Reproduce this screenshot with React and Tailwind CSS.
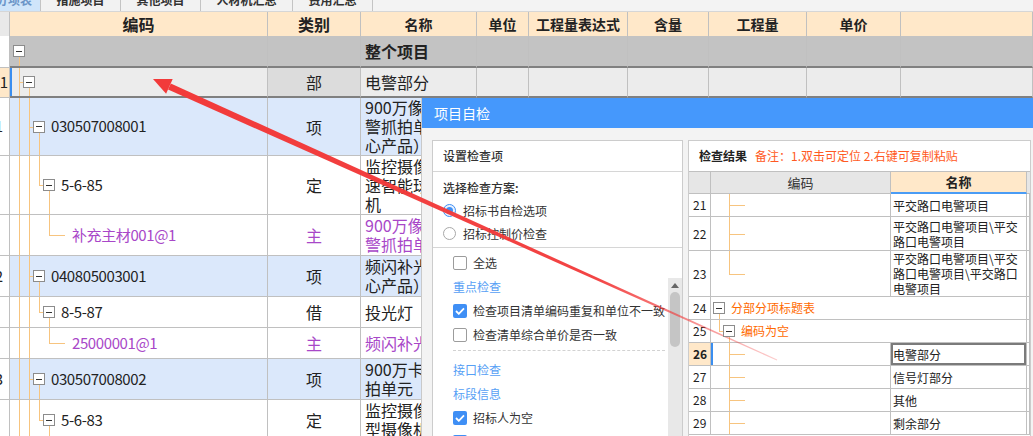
import React from 'react';

const FONT = "font-['Noto_Sans_CJK_SC','Noto_Sans',sans-serif]";
const MAIN_COLS = 'grid-cols-[10px_258px_93px_116px_52px_99px_81px_98px_94px_132px]';
const RES_COLS = 'grid-cols-[22px_180px_136px_1fr]';
const LINE = 'bg-[#f7c47f]';

// tree guide positions (relative to the code cell)
const LEFT = { 8: 'left-[8px]', 9: 'left-[9px]', 18: 'left-[18px]', 19: 'left-[19px]', 29: 'left-[29px]', 39: 'left-[39px]' };
const WIDTH = { 4: 'w-[4px]', 16: 'w-[16px]' };

const TreeLines = ({ full = [], up, hFrom, hLen = 4, down }) => (
  <>
    {full.map((x) => (
      <span key={x} className={`absolute top-0 bottom-0 w-px ${LINE} ${LEFT[x]}`} />
    ))}
    {up != null && <span className={`absolute top-0 h-1/2 w-px ${LINE} ${LEFT[up]}`} />}
    {hFrom != null && <span className={`absolute top-1/2 h-px ${LINE} ${LEFT[hFrom]} ${WIDTH[hLen]}`} />}
    {down != null && <span className={`absolute top-[calc(50%+6px)] bottom-0 w-px ${LINE} ${LEFT[down]}`} />}
  </>
);

const MinusBox = () => (
  <span className="relative z-10 flex w-[12px] h-[12px] shrink-0 items-center justify-center border border-[#8c8c8c] bg-white">
    <span className="w-[6px] h-px bg-[#333]" />
  </span>
);

const tabs = [
  { label: '分部分项表', w: 'w-[41px]', active: true },
  { label: '措施项目', w: 'w-[80px]' },
  { label: '其他项目', w: 'w-[80px]' },
  { label: '人材机汇总', w: 'w-[92px]' },
  { label: '费用汇总', w: 'w-[80px]' },
];

const headers = [
  { t: '编码', cls: 'text-[16px]' },
  { t: '类别', cls: 'text-[16px]' },
  { t: '名称' },
  { t: '单位' },
  { t: '工程量表达式' },
  { t: '含量' },
  { t: '工程量' },
  { t: '单价' },
  { t: '' },
];

const LIGHT = 'bg-[#dbe8fb]';

const rows = [
  { h: 'h-[32px]', bg: 'bg-[#c3c3c3]', thick: true, pad: 'pl-[3px]', box: true, tree: { down: 9 }, name: ['整个项目'], bold: true },
  { h: 'h-[30px]', bg: 'bg-[#ececec]', typeBg: 'bg-[#dcdcdc]', thick: true, num: '1', numBg: 'bg-[#ffe8c9]', sel: true, pad: 'pl-[13px]', box: true, tree: { full: [9], hFrom: 9, down: 19 }, type: '部', name: ['电警部分'] },
  { h: 'h-[58px]', bg: LIGHT, num: '1', cut: true, pad: 'pl-[23px]', box: true, tree: { full: [9, 19], hFrom: 19, down: 29 }, code: '030507008001', type: '项', name: ['900万像素电子', '警抓拍单元（核', '心产品）'] },
  { h: 'h-[59px]', bg: 'bg-white', pad: 'pl-[33px]', box: true, tree: { full: [9, 19], up: 29, hFrom: 29, down: 39 }, code: '5-6-85', type: '定', name: ['监控摄像机 高', '速智能球型摄像', '机'] },
  { h: 'h-[41px]', bg: 'bg-white', pad: 'pl-[62px]', tree: { full: [9, 19], up: 39, hFrom: 39, hLen: 16 }, code: '补充主材001@1', purple: true, type: '主', name: ['900万像素电子', '警抓拍单元'] },
  { h: 'h-[41px]', bg: LIGHT, num: '2', cut: true, pad: 'pl-[23px]', box: true, tree: { full: [9, 19], hFrom: 19, down: 29 }, code: '040805003001', type: '项', name: ['频闪补光灯（核', '心产品）'] },
  { h: 'h-[31px]', bg: 'bg-white', pad: 'pl-[33px]', box: true, tree: { full: [9, 19], up: 29, hFrom: 29, down: 39 }, code: '8-5-87', type: '借', name: ['投光灯'] },
  { h: 'h-[31px]', bg: 'bg-white', pad: 'pl-[62px]', tree: { full: [9, 19], up: 39, hFrom: 39, hLen: 16 }, code: '25000001@1', purple: true, type: '主', name: ['频闪补光灯'] },
  { h: 'h-[41px]', bg: LIGHT, num: '3', cut: true, pad: 'pl-[23px]', box: true, tree: { full: [9, 19], hFrom: 19, down: 29 }, code: '030507008002', type: '项', name: ['900万卡口抓', '拍单元'] },
  { h: 'h-[41px]', bg: 'bg-white', pad: 'pl-[33px]', box: true, tree: { full: [9, 19], up: 29, hFrom: 29, down: 39 }, code: '5-6-83', type: '定', name: ['监控摄像机 枪', '型摄像机'] },
];

const results = [
  { n: '21', h: 'h-[23px]', tree: { full: [18], hFrom: 18, hLen: 16 }, name: ['平交路口电警项目'] },
  { n: '22', h: 'h-[34px]', tree: { full: [18], hFrom: 18, hLen: 16 }, name: ['平交路口电警项目\\平交', '路口电警项目'] },
  { n: '23', h: 'h-[46px]', tree: { up: 18, hFrom: 18, hLen: 16 }, name: ['平交路口电警项目\\平交', '路口电警项目\\平交路口', '电警项目'] },
  { n: '24', h: 'h-[23px]', span: true, pad: 'pl-[2px]', tree: { down: 8 }, label: '分部分项标题表' },
  { n: '25', h: 'h-[23px]', span: true, pad: 'pl-[12px]', tree: { up: 8, hFrom: 8, hLen: 4, down: 18 }, label: '编码为空' },
  { n: '26', h: 'h-[23px]', sel: true, tree: { full: [18], hFrom: 18, hLen: 16 }, name: ['电警部分'] },
  { n: '27', h: 'h-[23px]', tree: { full: [18], hFrom: 18, hLen: 16 }, name: ['信号灯部分'] },
  { n: '28', h: 'h-[23px]', tree: { full: [18], hFrom: 18, hLen: 16 }, name: ['其他'] },
  { n: '29', h: 'h-[23px]', tree: { full: [18], hFrom: 18, hLen: 16 }, name: ['剩余部分'] },
];

const TabBar = () => (
  <div className="flex h-[12px] bg-[#f3f3f3] border-b border-[#d6d6d6]">
    {tabs.map((t) => (
      <div key={t.label} className={`${t.w} h-full overflow-hidden border-r border-[#c4c4c4] ${t.active ? 'bg-[#cfe5fa]' : 'bg-[#f2f2f2]'}`}>
        <div className={`-mt-[10px] h-[20px] leading-[20px] text-[12px] font-bold whitespace-nowrap flex ${t.active ? 'justify-end pr-[8px] text-[#6b95c8]' : 'justify-center text-[#333]'}`}>
          {t.label}
        </div>
      </div>
    ))}
  </div>
);

const GridRow = ({ r }) => {
  const cell = `border-r border-[#c0c0c0] ${r.thick ? 'border-b-2 border-b-[#808080]' : 'border-b border-b-[#c0c0c0]'}`;
  const color = r.purple ? 'text-[#a847c8]' : 'text-[#222]';
  return (
    <div className={`grid ${MAIN_COLS} ${r.h}`}>
      <div className={`border-r border-b border-[#c0c0c0] ${r.numBg || 'bg-white'} overflow-hidden flex items-center justify-end ${r.cut ? 'pr-[6px]' : 'pr-[1px]'} text-[15px] text-[#222]`}>
        {r.num}
      </div>
      <div className={`${cell} ${r.bg} relative flex items-center ${r.pad} ${r.sel ? 'shadow-[inset_2px_0_0_#3a8ef0]' : ''}`}>
        <TreeLines {...r.tree} />
        {r.box && <MinusBox />}
        {r.code && (
          <span className={`relative whitespace-nowrap ${r.box ? 'ml-[6px]' : ''} text-[15px] tracking-[-0.4px] ${color}`}>{r.code}</span>
        )}
      </div>
      <div className={`${cell} ${r.typeBg || r.bg} flex items-center justify-center text-[16px] ${color}`}>{r.type}</div>
      <div className={`${cell} ${r.bg} flex flex-col justify-center pl-[4px] overflow-hidden text-[16px] leading-[19px] ${r.bold ? 'font-bold' : ''} ${color}`}>
        {r.name.map((l) => (
          <span key={l} className="whitespace-nowrap">{l}</span>
        ))}
      </div>
      {[0, 1, 2, 3, 4, 5].map((i) => (
        <div key={i} className={`${cell} ${r.bg}`} />
      ))}
    </div>
  );
};

const Check = ({ checked, label }) => (
  <div className="h-[24px] flex items-center">
    {checked ? (
      <span className="w-[14px] h-[14px] shrink-0 rounded-[2px] bg-[#3f8ff5] flex items-center justify-center">
        <svg width="10" height="8" viewBox="0 0 10 8">
          <path d="M1 4l2.8 2.8L9 1.3" fill="none" stroke="#fff" strokeWidth="1.8" />
        </svg>
      </span>
    ) : (
      <span className="w-[14px] h-[14px] shrink-0 rounded-[2px] border border-[#9c9c9c] bg-white" />
    )}
    <span className="ml-[6px] whitespace-nowrap">{label}</span>
  </div>
);

const Radio = ({ checked, label }) => (
  <div className="h-[23px] flex items-center">
    <span className={`w-[13px] h-[13px] rounded-full border flex items-center justify-center ${checked ? 'border-[#3f8ff5] bg-[#e8f1fd]' : 'border-[#a8a8a8] bg-white'}`}>
      {checked && <span className="w-[7px] h-[7px] rounded-full bg-[#3f8ff5]" />}
    </span>
    <span className="ml-[7px]">{label}</span>
  </div>
);

const LeftPanel = () => (
  <div className="w-[251px] h-full shrink-0 bg-white border border-[#cccccc] flex flex-col text-[12px] text-[#333]">
    <div className="h-[31px] shrink-0 border-b border-[#d6d6d6] pl-[10px] flex items-center font-medium">设置检查项</div>
    <div className="shrink-0 border-b border-[#d6d6d6] pl-[10px] pt-[5px] pb-[2px]">
      <div className="h-[22px] flex items-center font-medium">选择检查方案:</div>
      <Radio checked label="招标书自检选项" />
      <Radio label="招标控制价检查" />
    </div>
    <div className="relative flex-1 pl-[20px] pt-[3px]">
      <Check label="全选" />
      <div className="h-[24px] flex items-center text-[#56a0f5]">重点检查</div>
      <Check checked label="检查项目清单编码重复和单位不一致" />
      <Check label="检查清单综合单价是否一致" />
      <div className="mt-[3px] mr-[17px] border-t border-dashed border-[#d2d2d2]" />
      <div className="mt-[7px] h-[24px] flex items-center text-[#56a0f5]">接口检查</div>
      <div className="h-[24px] flex items-center text-[#56a0f5]">标段信息</div>
      <Check checked label="招标人为空" />
      <Check checked label="招标代理为空" />
      {/* scrollbar */}
      <div className="absolute right-0 top-[30px] bottom-0 w-[14px] bg-[#e8e8e8]">
        <svg className="absolute left-[3px] top-[5px]" width="8" height="5" viewBox="0 0 8 5">
          <path d="M4 0L8 5H0z" fill="#666" />
        </svg>
        <div className="absolute left-[2px] right-[2px] top-[14px] h-[55px] rounded-full bg-[#c5c5c5]" />
      </div>
    </div>
  </div>
);

const ResultRow = ({ r }) => {
  const cell = 'border-r border-b border-[#c0c0c0]';
  return (
    <div className={`grid ${RES_COLS} ${r.h}`}>
      <div className={`${cell} pl-[4px] flex items-center text-[12px] ${r.sel ? 'bg-[#ffe8c9] font-bold' : 'bg-white'}`}>{r.n}</div>
      <div className={`${cell} relative flex items-center ${r.pad || ''} ${r.span ? 'col-span-2' : ''} ${r.sel ? 'shadow-[inset_2px_0_0_#3a8ef0]' : ''}`}>
        <TreeLines {...r.tree} />
        {r.label && (
          <>
            <MinusBox />
            <span className="relative ml-[6px] text-[12px] text-[#ff6a00]">{r.label}</span>
          </>
        )}
      </div>
      {!r.span && (
        <div className={`${cell} pl-[2px] flex flex-col justify-center text-[12px] leading-[15px] text-[#222] ${r.sel ? 'shadow-[inset_0_0_0_2px_#7b7b7b]' : ''}`}>
          {r.name.map((l) => (
            <span key={l} className="whitespace-nowrap">{l}</span>
          ))}
        </div>
      )}
      <div className={cell} />
    </div>
  );
};

const RightPanel = () => (
  <div className="w-[343px] h-full shrink-0 bg-white border border-[#cccccc] flex flex-col text-[12px]">
    <div className="h-[30px] shrink-0 pl-[10px] flex items-center whitespace-nowrap">
      <span className="font-bold text-[#222]">检查结果</span>
      <span className="ml-[8px] text-[#ff5a23]">备注：1.双击可定位 2.右键可复制粘贴</span>
    </div>
    <div className="border-t border-[#c0c0c0]">
      <div className={`grid ${RES_COLS} h-[22px]`}>
        <div className="bg-[#e6e6e6] border-r border-b border-[#c0c0c0]" />
        <div className="bg-[#e6e6e6] border-r border-b border-[#c0c0c0] flex items-center justify-center text-[13px] text-[#333]">编码</div>
        <div className="bg-[#ffe8c9] border-r border-[#c0c0c0] border-b-2 border-b-[#4a9cf5] flex items-center justify-center text-[13px] font-bold">名称</div>
        <div className="bg-[#e6e6e6] border-b border-[#c0c0c0]" />
      </div>
      {results.map((r) => (
        <ResultRow key={r.n} r={r} />
      ))}
    </div>
  </div>
);

const Dialog = () => (
  <div className="absolute left-[421px] top-[98px] w-[620px] h-[350px] flex flex-col border-l border-[#c9c9c9] bg-[#f3f3f3]">
    <div className="h-[30px] shrink-0 bg-[#4598fc] text-white text-[14px] pl-[12px] flex items-center">项目自检</div>
    <div className="flex-1 flex gap-[5px] pt-[12px] pl-[10px]">
      <LeftPanel />
      <RightPanel />
    </div>
  </div>
);

// annotation arrow drawn over the screenshot
const Arrow = () => (
  <svg className="absolute inset-0 pointer-events-none" width="1033" height="436" viewBox="0 0 1033 436">
    <defs>
      <linearGradient id="fade" gradientUnits="userSpaceOnUse" x1="169" y1="86" x2="777" y2="360">
        <stop offset="0" stopColor="#f23a3a" stopOpacity="1" />
        <stop offset="0.7" stopColor="#f23a3a" stopOpacity="0.95" />
        <stop offset="1" stopColor="#f23a3a" stopOpacity="0.25" />
      </linearGradient>
    </defs>
    <polygon points="170.8,83.4 777.2,359.5 776.8,360.5 168,89.5" fill="url(#fade)" />
    <polygon points="153,79 172.7,79.1 166.1,93.7" fill="#f23a3a" />
  </svg>
);

export default function App() {
  return (
    <div className={`relative w-[1033px] h-[436px] overflow-hidden bg-white text-[#222] ${FONT}`}>
      <TabBar />
      <div className={`grid ${MAIN_COLS} h-[24px]`}>
        <div className="bg-[#e9e9e9] border-r border-b border-[#c0c0c0]" />
        {headers.map((h, i) => (
          <div key={i} className={`bg-[#ffe8c9] border-r border-[#c0c0c0] border-b-2 border-b-[#4a9cf5] flex items-center justify-center font-bold whitespace-nowrap ${h.cls || 'text-[14px]'}`}>
            {h.t}
          </div>
        ))}
      </div>
      {rows.map((r, i) => (
        <GridRow key={i} r={r} />
      ))}
      <Dialog />
      <Arrow />
    </div>
  );
}
